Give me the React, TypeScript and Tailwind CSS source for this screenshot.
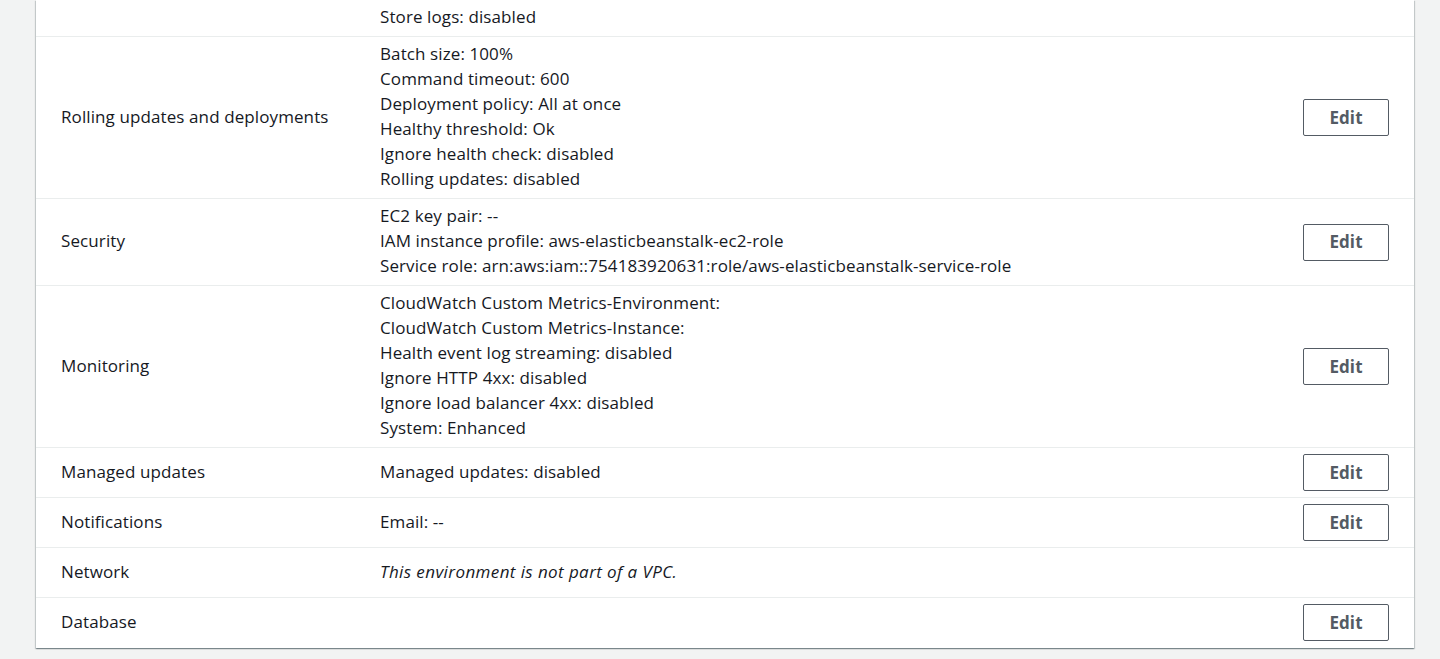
import React from "react";

type Row = { label: string; lines: React.ReactNode[]; edit: boolean; italic?: boolean };

const rows: Row[] = [
  {
    label: "Rolling updates and deployments",
    lines: [
      "Batch size: 100%",
      "Command timeout: 600",
      "Deployment policy: All at once",
      "Healthy threshold: Ok",
      "Ignore health check: disabled",
      "Rolling updates: disabled",
    ],
    edit: true,
  },
  {
    label: "Security",
    lines: [
      "EC2 key pair: --",
      "IAM instance profile: aws-elasticbeanstalk-ec2-role",
      "Service role: arn:aws:iam::754183920631:role/aws-elasticbeanstalk-service-role",
    ],
    edit: true,
  },
  {
    label: "Monitoring",
    lines: [
      "CloudWatch Custom Metrics-Environment:",
      "CloudWatch Custom Metrics-Instance:",
      "Health event log streaming: disabled",
      "Ignore HTTP 4xx: disabled",
      "Ignore load balancer 4xx: disabled",
      "System: Enhanced",
    ],
    edit: true,
  },
  { label: "Managed updates", lines: ["Managed updates: disabled"], edit: true },
  { label: "Notifications", lines: ["Email: --"], edit: true },
  { label: "Network", lines: ["This environment is not part of a VPC."], edit: false, italic: true },
  { label: "Database", lines: [], edit: true },
];

function EditButton() {
  return (
    <button className="w-[86px] h-[37px] border border-[#545b64] rounded-[2px] bg-white text-[#545b64] font-bold text-[17px] leading-[22px] flex items-center justify-center">
      Edit
    </button>
  );
}

export default function App() {
  return (
    <div
      className="w-[1440px] h-[659px] overflow-hidden bg-[#f2f3f3] text-[#16191f] text-[17px] leading-[25px] tracking-[0.1px]"
      style={{ fontFamily: '"Open Sans", "Noto Sans", sans-serif' }}
    >
      <div className="ml-[36px] w-[1378px] bg-white shadow-[0_1px_1px_0_rgba(0,28,36,0.3),1px_1px_1px_0_rgba(0,28,36,0.15),-1px_1px_1px_0_rgba(0,28,36,0.15)]">
        <div className="flex border-b border-[#eaeded]">
          <div className="w-[344px]" />
          <div className="pt-[4px] pb-[7px]">Store logs: disabled</div>
        </div>
        {rows.map((r, i) => {
          const last = i === rows.length - 1;
          return (
            <div
              key={r.label}
              className={`flex items-center ${last ? "min-h-[50px] pb-[1px]" : "min-h-[50px] border-b border-[#eaeded]"}`}
            >
              <div className="w-[344px] shrink-0 pl-[25px] pb-[3px]">{r.label}</div>
              <div className={`flex-1 flex flex-col pt-[4px] pb-[7px] ${r.italic ? "italic tracking-[0.4px]" : ""}`}>
                {r.lines.map((l, j) => (
                  <div key={j}>{l}</div>
                ))}
              </div>
              <div className="w-[86px] mr-[25px] shrink-0 flex justify-end">{r.edit ? <EditButton /> : null}</div>
            </div>
          );
        })}
      </div>
    </div>
  );
}
